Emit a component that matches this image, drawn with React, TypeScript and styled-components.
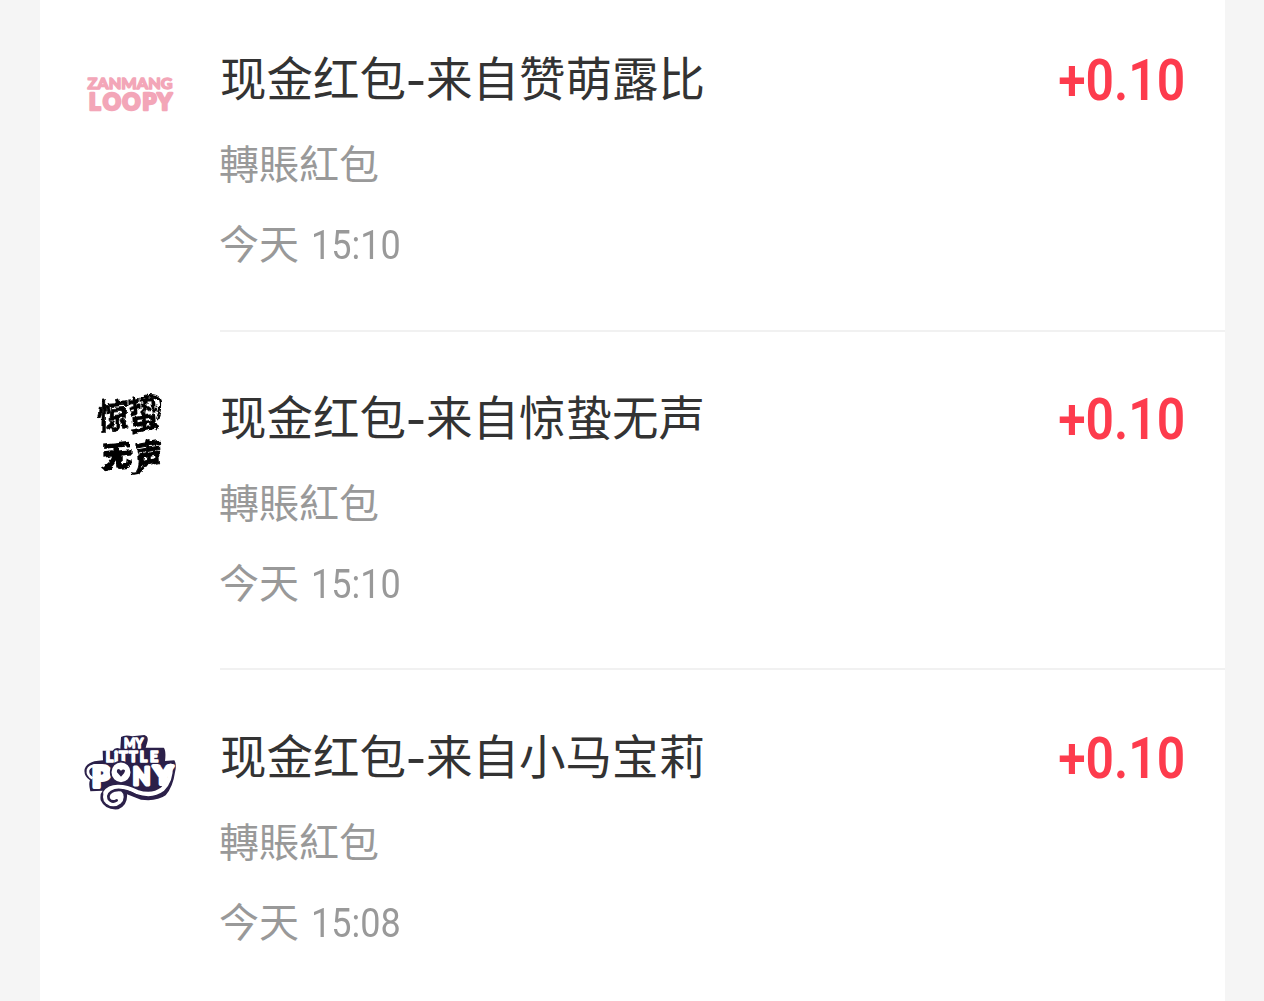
import React from "react";
import styled, { createGlobalStyle } from "styled-components";

const GlobalStyle = createGlobalStyle`
  * { box-sizing: border-box; }
  body { margin: 0; background: #f5f5f5; }
`;

const Page = styled.main`
  height: 1001px;
  padding: 0 39px 0 40px;
  overflow: hidden;
  background: #f5f5f5;
  font-family: "Noto Sans CJK SC", "Noto Sans", sans-serif;
`;

const Card = styled.section`
  height: 100%;
  background: #fff;
`;

const Row = styled.article<{ $first?: boolean }>`
  display: flex;
  height: ${(p) => (p.$first ? 332 : 338)}px;
  padding-left: 35px;
  gap: 35px;
`;

const LogoBox = styled.div<{ $first?: boolean }>`
  flex: none;
  width: 110px;
  height: 120px;
  margin-top: ${(p) => (p.$first ? 33 : 41)}px;

  svg { display: block; overflow: visible; }
`;

const Body = styled.div<{ $first?: boolean; $last?: boolean }>`
  flex: 1;
  display: flex;
  justify-content: space-between;
  align-items: flex-start;
  padding: ${(p) => (p.$first ? 47 : p.$last ? 55 : 54)}px 40px 0 0;
  border-bottom: ${(p) => (p.$last ? "0" : "2px solid #f1f1f1")};
`;

const Details = styled.div`
  display: flex;
  flex-direction: column;
  white-space: nowrap;
`;

const Title = styled.h2`
  margin: -1px 0 0;
  color: #333;
  font-size: 46.5px;
  font-weight: 400;
  line-height: 60px;
`;

const Dash = styled.span`
  display: inline-block;
  width: 20px;
  text-align: center;
  font-weight: 500;
  transform: scaleX(1.2);
`;

const Kind = styled.p`
  margin: 31px 0 0 -1px;
  color: #999;
  font-family: "Noto Sans CJK TC", "Noto Sans", sans-serif;
  font-size: 40px;
  line-height: 50px;
`;

const When = styled.p`
  display: flex;
  gap: 12px;
  margin: 30px 0 0 -1px;
  color: #999;
  font-size: 40px;
  line-height: 50px;
`;

const Clock = styled.span`
  padding-top: 4px;
  font-family: Roboto, "Liberation Sans", sans-serif;
  transform: scaleX(0.9);
  transform-origin: left center;
`;

const Amount = styled.span`
  margin-top: 2px;
  color: #fd3b4d;
  font-family: Roboto, "Liberation Sans", sans-serif;
  font-size: 57px;
  font-weight: 600;
  line-height: 64px;
  transform: scaleX(0.875);
  transform-origin: right center;
`;

const LoopyLogo = () => (
  <svg width="110" height="120" viewBox="0 0 110 120" fill="#f3a6b8" stroke="#f3a6b8" strokeLinejoin="round" fontFamily="Lato, sans-serif" fontWeight="900">
    <text x="12.5" y="55.5" fontSize="15" strokeWidth="1.3" textLength="85" lengthAdjust="spacingAndGlyphs">ZANMANG</text>
    <text y="76.5" fontSize="22" strokeWidth="2.6" x="14 28 47.5 67.5 82.5">LOOPY</text>
  </svg>
);

const BrushLogo = () => (
  <svg width="110" height="120" viewBox="0 0 110 120" fill="#050505" stroke="#050505" fontFamily="Noto Sans CJK SC, sans-serif" fontWeight="700">
    <defs>
      <filter id="brush" x="-10%" y="-10%" width="120%" height="120%">
        <feTurbulence type="fractalNoise" baseFrequency="0.12" numOctaves="3" seed="7" result="n" />
        <feDisplacementMap in="SourceGraphic" in2="n" scale="5" xChannelSelector="R" yChannelSelector="G" />
      </filter>
    </defs>
    <g filter="url(#brush)" strokeWidth="0.7">
      <text fontSize="32" transform="translate(22 57) rotate(-5) skewX(-6) scale(.98 1.08)">惊</text>
      <text fontSize="32" strokeWidth="0.2" transform="translate(54 58) rotate(-9) skewX(-4) scale(1 1.22)">蛰</text>
      <text fontSize="30" strokeWidth="2" transform="translate(27 95) rotate(-6) skewX(-6) scale(1 .98)">无</text>
      <text fontSize="28" strokeWidth="0.9" transform="translate(61 98) rotate(-10) skewX(-6) scale(.98 1.2)">声</text>
      <path d="M66 25q12-4 18 1q3 8-2 20M56 100q9 4 18-14" fill="none" strokeWidth="2.2" />
    </g>
  </svg>
);

const PonyLogo = () => (
  <svg width="110" height="120" viewBox="0 0 110 120">
    <g transform="translate(0 14) scale(.33333)">
      <path d="M138 36Q150 28 172 34L208 30Q222 34 217 51L212 68H266Q274 76 270 108L298 106Q306 118 300 142Q294 186 272 211Q246 230 198 224L156 208Q159 240 130 253Q91 257 77 226Q74 206 83 197L46 199Q40 176 45 166Q25 152 29 132Q36 108 84 106L83 77H113Q120 65 136 71Z" fill="#2b2049" />
      <path d="M287 122Q289 168 262 193Q232 216 186 201C145 180 105 180 91 203" fill="none" stroke="#fff" strokeWidth="13" strokeLinecap="round" />
      <ellipse cx="115" cy="216" rx="31" ry="28" fill="#fff" />
      <path d="M186 213Q145 190 120 196Q96 204 101 221Q111 235 125 226" fill="none" stroke="#2b2049" strokeWidth="8" strokeLinecap="round" />
      <path d="M53 160Q36 151 39 135Q43 122 65 122" fill="none" stroke="#fff" strokeWidth="8" />
      <g fill="#fff" stroke="#fff" fontFamily="Lato, sans-serif" fontWeight="900" strokeLinejoin="round">
        <text x="147" y="69" fontSize="38" strokeWidth="4" textLength="58" lengthAdjust="spacingAndGlyphs">MY</text>
        <text x="92 118 132 162 194 225" y="110" fontSize="43" strokeWidth="5">LiTTLE</text>
        <g strokeWidth="12">
          <text x="52" y="187" fontSize="84" textLength="54" lengthAdjust="spacingAndGlyphs">P</text>
          <text x="173" y="179" fontSize="71" strokeWidth="9" textLength="53" lengthAdjust="spacingAndGlyphs">N</text>
          <text x="236" y="176" fontSize="75" textLength="56" lengthAdjust="spacingAndGlyphs">Y</text>
        </g>
      </g>
      <ellipse cx="138" cy="142" rx="31" ry="32" fill="#fff" stroke="#2b2049" strokeWidth="5" />
      <path d="M138 155L126 142Q124 132 132 132L138 137Q145 130 150 136Q150 144 138 155Z" fill="#2b2049" />
    </g>
  </svg>
);

const entries = [
  { sender: "赞萌露比", time: "15:10", Logo: LoopyLogo },
  { sender: "惊蛰无声", time: "15:10", Logo: BrushLogo },
  { sender: "小马宝莉", time: "15:08", Logo: PonyLogo },
];

export default function App() {
  return (
    <>
      <GlobalStyle />
      <Page>
        <Card>
          {entries.map(({ sender, time, Logo }, i) => (
            <Row key={sender} $first={i === 0}>
              <LogoBox $first={i === 0}><Logo /></LogoBox>
              <Body $first={i === 0} $last={i === entries.length - 1}>
                <Details>
                  <Title>现金红包<Dash>-</Dash>来自{sender}</Title>
                  <Kind>轉賬紅包</Kind>
                  <When><span>今天</span><Clock>{time}</Clock></When>
                </Details>
                <Amount>+0.10</Amount>
              </Body>
            </Row>
          ))}
        </Card>
      </Page>
    </>
  );
}
